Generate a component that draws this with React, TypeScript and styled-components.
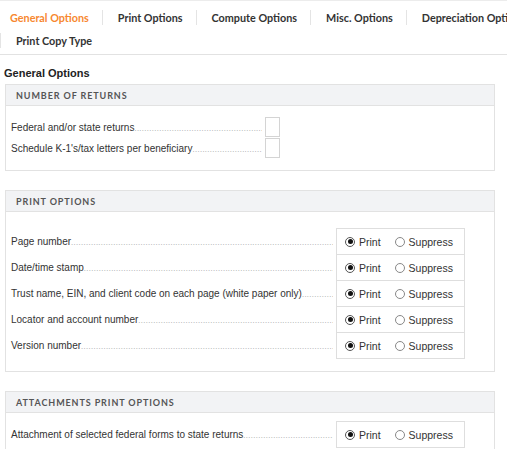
import React, { useState } from 'react';
import styled, { createGlobalStyle } from 'styled-components';

const GlobalStyle = createGlobalStyle`
  html, body {
    margin: 0;
    padding: 0;
    background: #fff;
    overflow: hidden;
  }
  body {
    font-family: 'Liberation Sans', Arial, sans-serif;
    color: #333;
  }
`;

const tabs = [
  'General Options',
  'Print Options',
  'Compute Options',
  'Misc. Options',
  'Depreciation Options',
  'Print Copy Type',
];

const printRows = [
  'Page number',
  'Date/time stamp',
  'Trust name, EIN, and client code on each page (white paper only)',
  'Locator and account number',
  'Version number',
];

const Page = styled.div`
  width: 507px;
  height: 449px;
  overflow: hidden;
`;

const TabBar = styled.div`
  width: 560px;
  display: flex;
  flex-wrap: wrap;
  padding: 5px 0 2px;
  border-top: 1px solid #ececec;
  border-bottom: 1px solid #e2e2e2;
`;

const Tab = styled.div<{ $active?: boolean }>`
  display: flex;
  align-items: center;
  height: 23px;
  padding-right: 13px;
  font-family: Lato, 'Open Sans', sans-serif;
  font-size: 10.8px;
  font-weight: 700;
  white-space: nowrap;
  color: ${(p) => (p.$active ? '#f7882f' : '#333')};
  cursor: pointer;

  &:first-child {
    padding-left: 10px;
  }
  &:not(:first-child)::before {
    content: '';
    display: inline-block;
    width: 1px;
    height: 15px;
    background: #e4e4e4;
    margin-right: 15px;
  }
`;

const Content = styled.div`
  padding: 12px 12px 0 5px;
`;

const Heading = styled.div`
  font-size: 11px;
  font-weight: 700;
  color: #222;
  margin-left: -1px;
  margin-bottom: 5px;
`;

const Section = styled.section`
  border: 1px solid #e2e2e2;
  margin-bottom: 19px;
`;

const SectionHead = styled.div`
  height: 20px;
  display: flex;
  align-items: center;
  padding-left: 10px;
  background: #f2f3f5;
  border-bottom: 1px solid #e2e2e2;
  font-family: Lato, 'Open Sans', sans-serif;
  font-size: 9px;
  font-weight: 700;
  letter-spacing: 0.9px;
  color: #555;
`;

const SectionBody = styled.div<{ $pt: number; $pb: number }>`
  padding: ${(p) => p.$pt}px 0 ${(p) => p.$pb}px 5px;
`;

/* $gap: space between stacked rows; -1 lets the radio boxes share a border */
const Row = styled.div<{ $h: number; $gap: number }>`
  display: flex;
  align-items: center;
  height: ${(p) => p.$h}px;
  margin-top: ${(p) => p.$gap}px;
  &:first-child {
    margin-top: 0;
  }
`;

const Label = styled.div<{ $w: number }>`
  width: ${(p) => p.$w}px;
  display: flex;
  align-items: baseline;
  font-size: 10px;
  color: #333;
  white-space: nowrap;
  margin-right: 3px;
`;

const Leader = styled.span`
  flex: 1;
  overflow: hidden;
  color: #9a9a9a;
  font-size: 7.5px;
  letter-spacing: 0.4px;
  &::after {
    content: '..........................................................................................................................................................................................';
  }
`;

const NumBox = styled.input`
  box-sizing: border-box;
  width: 15px;
  height: 20px;
  border: 1px solid #d4d4d4;
  padding: 0;
  margin: 0;
  outline: none;
`;

const RadioGroup = styled.div`
  box-sizing: border-box;
  width: 129px;
  height: 27px;
  display: flex;
  align-items: center;
  padding-left: 8px;
  gap: 14px;
  border: 1px solid #dedede;
`;

const RadioOpt = styled.label`
  display: flex;
  align-items: center;
  gap: 4px;
  font-size: 10.5px;
  color: #333;
  cursor: pointer;
`;

const Dot = styled.span<{ $on: boolean }>`
  box-sizing: border-box;
  width: 10px;
  height: 10px;
  border-radius: 50%;
  border: 1px solid ${(p) => (p.$on ? '#555' : '#888')};
  display: flex;
  align-items: center;
  justify-content: center;
  &::after {
    content: '';
    width: 5px;
    height: 5px;
    border-radius: 50%;
    background: ${(p) => (p.$on ? '#111' : 'transparent')};
  }
`;

const PrintToggle = ({ init = 'print' }: { init?: string }) => {
  const [v, setV] = useState(init);
  return (
    <RadioGroup>
      <RadioOpt onClick={() => setV('print')}>
        <Dot $on={v === 'print'} />
        Print
      </RadioOpt>
      <RadioOpt onClick={() => setV('suppress')}>
        <Dot $on={v === 'suppress'} />
        Suppress
      </RadioOpt>
    </RadioGroup>
  );
};

const App = () => {
  const [tab, setTab] = useState(0);

  return (
    <Page>
      <GlobalStyle />
      <TabBar>
        {tabs.map((t, i) => (
          <Tab key={t} $active={tab === i} onClick={() => setTab(i)}>
            {t}
          </Tab>
        ))}
      </TabBar>
      <Content>
        <Heading>General Options</Heading>

        <Section>
          <SectionHead>NUMBER OF RETURNS</SectionHead>
          <SectionBody $pt={11} $pb={12}>
            <Row $h={20} $gap={1}>
              <Label $w={251}>
                Federal and/or state returns
                <Leader />
              </Label>
              <NumBox />
            </Row>
            <Row $h={20} $gap={1}>
              <Label $w={251}>
                Schedule K-1's/tax letters per beneficiary
                <Leader />
              </Label>
              <NumBox />
            </Row>
          </SectionBody>
        </Section>

        <Section>
          <SectionHead>PRINT OPTIONS</SectionHead>
          <SectionBody $pt={16} $pb={12}>
            {printRows.map((r) => (
              <Row $h={27} $gap={-1} key={r}>
                <Label $w={322}>
                  {r}
                  <Leader />
                </Label>
                <PrintToggle />
              </Row>
            ))}
          </SectionBody>
        </Section>

        <Section>
          <SectionHead>ATTACHMENTS PRINT OPTIONS</SectionHead>
          <SectionBody $pt={8} $pb={10}>
            <Row $h={27} $gap={0}>
              <Label $w={322}>
                Attachment of selected federal forms to state returns
                <Leader />
              </Label>
              <PrintToggle />
            </Row>
          </SectionBody>
        </Section>
      </Content>
    </Page>
  );
};

export default App;
